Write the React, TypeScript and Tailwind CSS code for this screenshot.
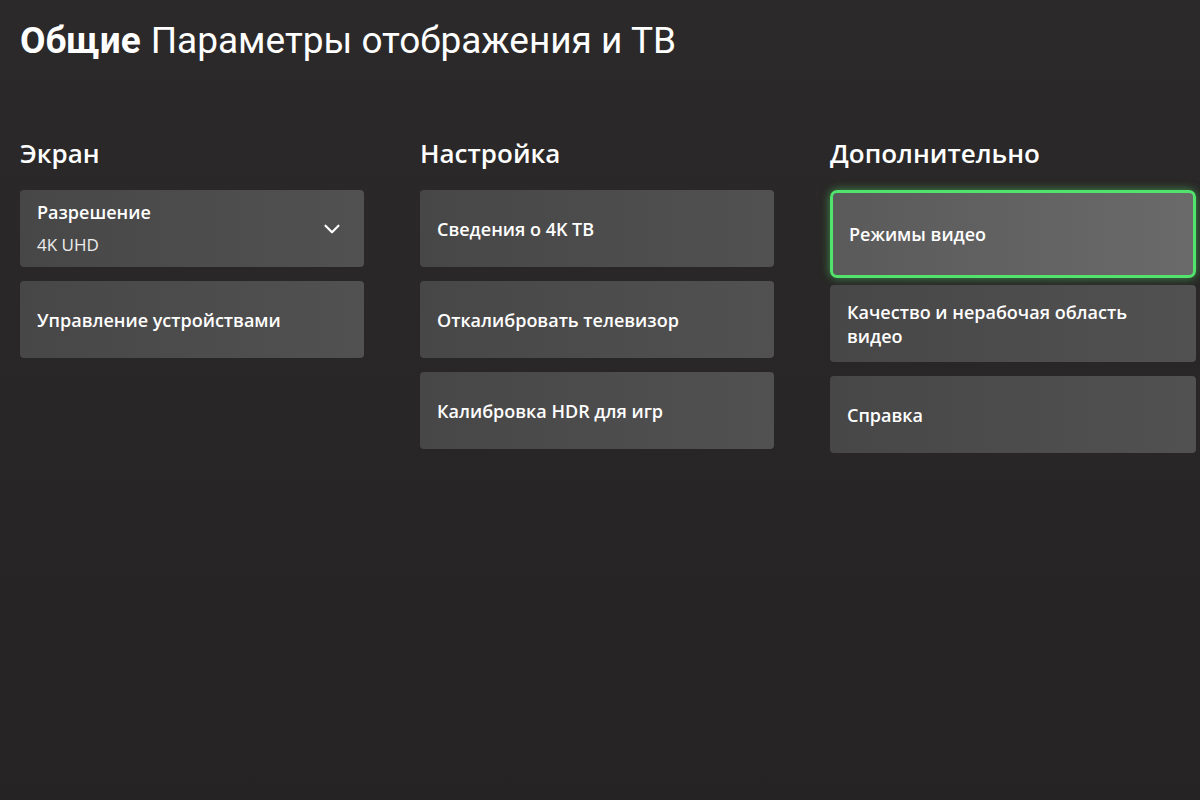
import { ChevronDown } from 'lucide-react'

interface CardProps {
    label: string
    value?: string
    dropdown?: boolean
    focused?: boolean
}

function Card({ label, value, dropdown, focused }: CardProps) {
    if (focused) {
        // focus ring sits outside the card, so it eats into the gap below
        return (
            <div className="h-[88px] -mb-[7px] rounded-[7px] border-[3px] border-[#52e36c] bg-gradient-to-r from-[#5a5a5a] to-[#6a6a6a] shadow-[0_0_10px_rgba(82,227,108,0.55)] px-[16px] flex items-center">
                <span className="text-[18px] font-semibold text-white leading-tight">{label}</span>
            </div>
        )
    }
    return (
        <div className="h-[77px] rounded-[4px] bg-gradient-to-r from-[#484747] to-[#525151] px-[17px] flex items-center justify-between">
            <div className="flex flex-col">
                <span className="text-[18px] font-semibold text-white leading-[24px]">{label}</span>
                {value && <span className="text-[17px] text-[#ededed] leading-[24px] mt-[9px]">{value}</span>}
            </div>
            {dropdown && <ChevronDown className="text-white w-[26px] h-[26px] mr-[2px]" strokeWidth={2} />}
        </div>
    )
}

const columns = [
    {
        title: 'Экран',
        width: 'w-[344px]',
        items: [
            { label: 'Разрешение', value: '4K UHD', dropdown: true },
            { label: 'Управление устройствами' }
        ]
    },
    {
        title: 'Настройка',
        width: 'w-[354px]',
        items: [
            { label: 'Сведения о 4K ТВ' },
            { label: 'Откалибровать телевизор' },
            { label: 'Калибровка HDR для игр' }
        ]
    },
    {
        title: 'Дополнительно',
        width: 'w-[366px]',
        items: [
            { label: 'Режимы видео', focused: true },
            { label: 'Качество и нерабочая область видео' },
            { label: 'Справка' }
        ]
    }
]

export default function App() {
    return (
        <div className="w-[1200px] h-[800px] bg-gradient-to-b from-[#2b2929] to-[#252323] overflow-hidden" style={{ fontFamily: '"Open Sans", "Noto Sans", sans-serif' }}>
            {/* Page title */}
            <div className="pl-[20px] pt-[18px] text-white text-[37px] leading-[46px]" style={{ fontFamily: 'Roboto, "Noto Sans", sans-serif' }}>
                <span className="font-bold">Общие</span>
                <span className="ml-[10px]">Параметры отображения и ТВ</span>
            </div>

            {/* Columns */}
            <div className="flex gap-[56px] pl-[20px] mt-[72px]">
                {columns.map((col) => (
                    <div key={col.title} className={col.width}>
                        <div className="text-[26px] font-semibold text-white leading-[34px] mb-[20px]">{col.title}</div>
                        <div className="flex flex-col gap-[14px]">
                            {col.items.map((item) => (
                                <Card key={item.label} {...item} />
                            ))}
                        </div>
                    </div>
                ))}
            </div>
        </div>
    )
}
